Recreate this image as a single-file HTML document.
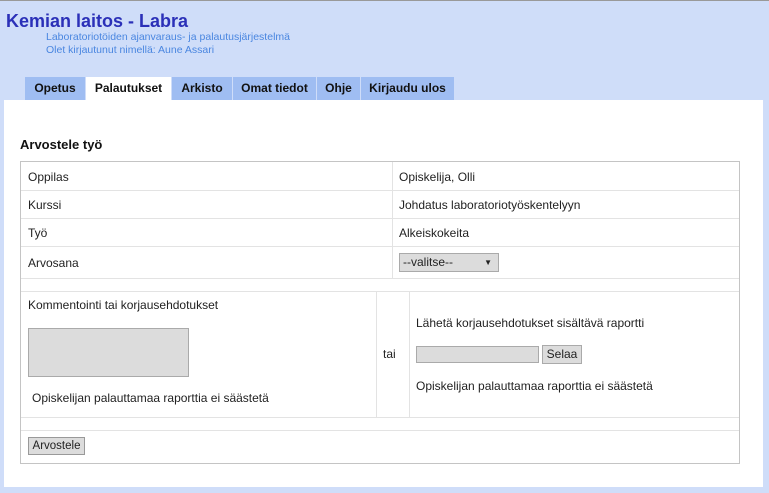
<!DOCTYPE html>
<html><head><meta charset="utf-8"><style>
*{margin:0;padding:0;box-sizing:border-box}
body{width:769px;height:493px;background:#cfddf9;font-family:"Liberation Sans",Arial,sans-serif;position:relative;overflow:hidden;color:#222}
.a{position:absolute;white-space:nowrap}
.t{font-size:12px;color:#222}
.tab{position:absolute;top:77px;height:23px;background:#9fbdf2;font-weight:bold;font-size:12px;text-align:center;line-height:23px;color:#111}
.hl{position:absolute;height:1px;background:#e3e3e3}
.vl{position:absolute;width:1px;background:#e3e3e3}
</style></head><body>
<div class="a" style="left:0;top:0;width:769px;height:1px;background:#999"></div>
<div class="a" style="left:6px;top:11px;font-size:18px;font-weight:bold;color:#2b30b8">Kemian laitos - Labra</div>
<div class="a" style="left:46px;top:31px;font-size:10.5px;color:#4a86e0">Laboratoriotöiden ajanvaraus- ja palautusjärjestelmä</div>
<div class="a" style="left:46px;top:44px;font-size:10.5px;color:#4a86e0">Olet kirjautunut nimellä: Aune Assari</div>
<div class="tab" style="left:25px;width:60px">Opetus</div>
<div class="tab" style="left:86px;width:85px;background:#fff">Palautukset</div>
<div class="tab" style="left:172px;width:60px">Arkisto</div>
<div class="tab" style="left:233px;width:83px">Omat tiedot</div>
<div class="tab" style="left:317px;width:43px">Ohje</div>
<div class="tab" style="left:361px;width:93px">Kirjaudu ulos</div>
<div class="a" style="left:4px;top:100px;width:759px;height:387px;background:#fff"></div>
<div class="a" style="left:20px;top:137px;font-size:13px;font-weight:bold;color:#111">Arvostele työ</div>
<div class="a" style="left:20px;top:161px;width:720px;height:303px;border:1px solid #c4c4c4"></div>
<div class="hl" style="left:21px;top:190px;width:718px"></div>
<div class="hl" style="left:21px;top:218px;width:718px"></div>
<div class="hl" style="left:21px;top:246px;width:718px"></div>
<div class="hl" style="left:21px;top:278px;width:718px"></div>
<div class="hl" style="left:21px;top:291px;width:718px"></div>
<div class="hl" style="left:21px;top:417px;width:718px"></div>
<div class="hl" style="left:21px;top:430px;width:718px"></div>
<div class="vl" style="left:392px;top:162px;height:116px"></div>
<div class="vl" style="left:376px;top:292px;height:125px"></div>
<div class="vl" style="left:409px;top:292px;height:125px"></div>
<div class="a t" style="left:28px;top:170px">Oppilas</div>
<div class="a t" style="left:399px;top:170px">Opiskelija, Olli</div>
<div class="a t" style="left:28px;top:198px">Kurssi</div>
<div class="a t" style="left:399px;top:198px">Johdatus laboratoriotyöskentelyyn</div>
<div class="a t" style="left:28px;top:226px">Työ</div>
<div class="a t" style="left:399px;top:226px">Alkeiskokeita</div>
<div class="a t" style="left:28px;top:256px">Arvosana</div>
<div class="a" style="left:399px;top:253px;width:100px;height:19px;background:#dcdcdc;border:1px solid #aaa;font-size:12px;line-height:17px;padding-left:3px">--valitse--<span style="position:absolute;right:6px;top:0;font-size:8px">▼</span></div>
<div class="a t" style="left:28px;top:298px">Kommentointi tai korjausehdotukset</div>
<div class="a" style="left:28px;top:328px;width:161px;height:49px;background:#dcdcdc;border:1px solid #aaa"></div>
<div class="a t" style="left:32px;top:391px">Opiskelijan palauttamaa raporttia ei säästetä</div>
<div class="a t" style="left:383px;top:347px">tai</div>
<div class="a t" style="left:416px;top:316px">Lähetä korjausehdotukset sisältävä raportti</div>
<div class="a" style="left:416px;top:346px;width:123px;height:17px;background:#dcdcdc;border:1px solid #aaa"></div>
<div class="a t" style="left:542px;top:345px;width:40px;height:19px;background:#dcdcdc;border:1px solid #aaa;text-align:center;line-height:17px">Selaa</div>
<div class="a t" style="left:416px;top:379px">Opiskelijan palauttamaa raporttia ei säästetä</div>
<div class="a t" style="left:28px;top:437px;width:57px;height:18px;background:#dcdcdc;border:1px solid #999;text-align:center;line-height:16px;font-size:11.5px">Arvostele</div>
</body></html>
